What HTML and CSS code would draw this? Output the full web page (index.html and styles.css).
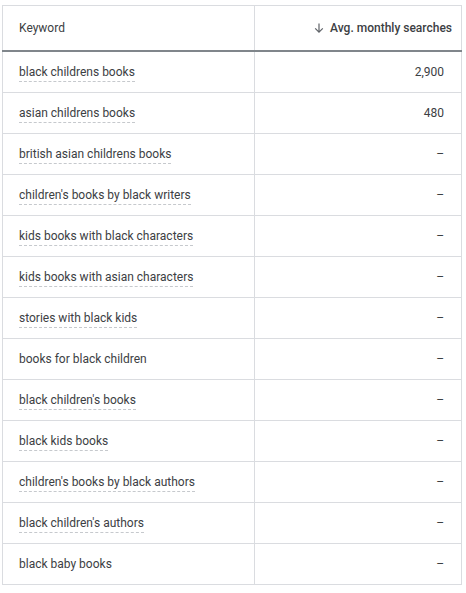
FILE: index.html
```html
<!DOCTYPE html>
<html lang="en">
<head>
  <meta charset="UTF-8">
  <title>Keyword ideas</title>
  <link rel="stylesheet" href="styles.css">
</head>
<body>

  <table class="kw-table">
    <thead>
      <tr>
        <th class="col-kw">Keyword</th>
        <th class="col-num sorted">
          <svg class="sort-icon" width="12" height="12" viewBox="0 0 12 12">
            <path d="M6 1.5v8.5M2.2 6.4L6 10.2l3.8-3.8" fill="none" stroke="#5f6368" stroke-width="1.2"/>
          </svg>Avg. monthly searches
        </th>
      </tr>
    </thead>
    <tbody>
      <tr><td><span class="kw">black childrens books</span></td><td class="col-num">2,900</td></tr>
      <tr><td><span class="kw">asian childrens books</span></td><td class="col-num">480</td></tr>
      <tr><td><span class="kw">british asian childrens books</span></td><td class="col-num">–</td></tr>
      <tr><td><span class="kw">children's books by black writers</span></td><td class="col-num">–</td></tr>
      <tr><td><span class="kw">kids books with black characters</span></td><td class="col-num">–</td></tr>
      <tr><td><span class="kw">kids books with asian characters</span></td><td class="col-num">–</td></tr>
      <tr><td><span class="kw">stories with black kids</span></td><td class="col-num">–</td></tr>
      <tr><td><span class="kw plain">books for black children</span></td><td class="col-num">–</td></tr>
      <tr><td><span class="kw">black children's books</span></td><td class="col-num">–</td></tr>
      <tr><td><span class="kw">black kids books</span></td><td class="col-num">–</td></tr>
      <tr><td><span class="kw">children's books by black authors</span></td><td class="col-num">–</td></tr>
      <tr><td><span class="kw">black children's authors</span></td><td class="col-num">–</td></tr>
      <tr><td><span class="kw plain">black baby books</span></td><td class="col-num">–</td></tr>
    </tbody>
  </table>

</body>
</html>
```

FILE: styles.css
```css
body {
  margin: 0;
  padding: 5px 0 0 2px;
  background: #fff;
  font-family: Roboto, Arial, sans-serif;
  font-size: 12px;
  color: #3c4043;
}
.kw-table {
  width: 460px;
  border-collapse: collapse;
  border: 1px solid #dadce0;
}
.kw-table th {
  height: 44px;
  padding: 0 16px;
  text-align: left;
  font-weight: 400;
  color: #3c4043;
  border-bottom: 2px solid #80868b;
}
.kw-table td {
  height: 40px;
  padding: 0 16px;
  border-bottom: 1px solid #dadce0;
}
.col-kw {
  width: 219px;
}
.kw-table th + th,
.kw-table td + td {
  border-left: 1px solid #dadce0;
}
.kw-table .col-num {
  text-align: right;
  padding-right: 17px;
}
.kw-table th.sorted {
  padding-right: 9px;
  font-weight: 500;
  color: #3c4043;
}
.sort-icon {
  vertical-align: -2px;
  margin-right: 5px;
}
.kw {
  padding-bottom: 2px;
  border-bottom: 1px dashed #c6c9cd;
}
.kw.plain {
  border-bottom: none;
}
```
